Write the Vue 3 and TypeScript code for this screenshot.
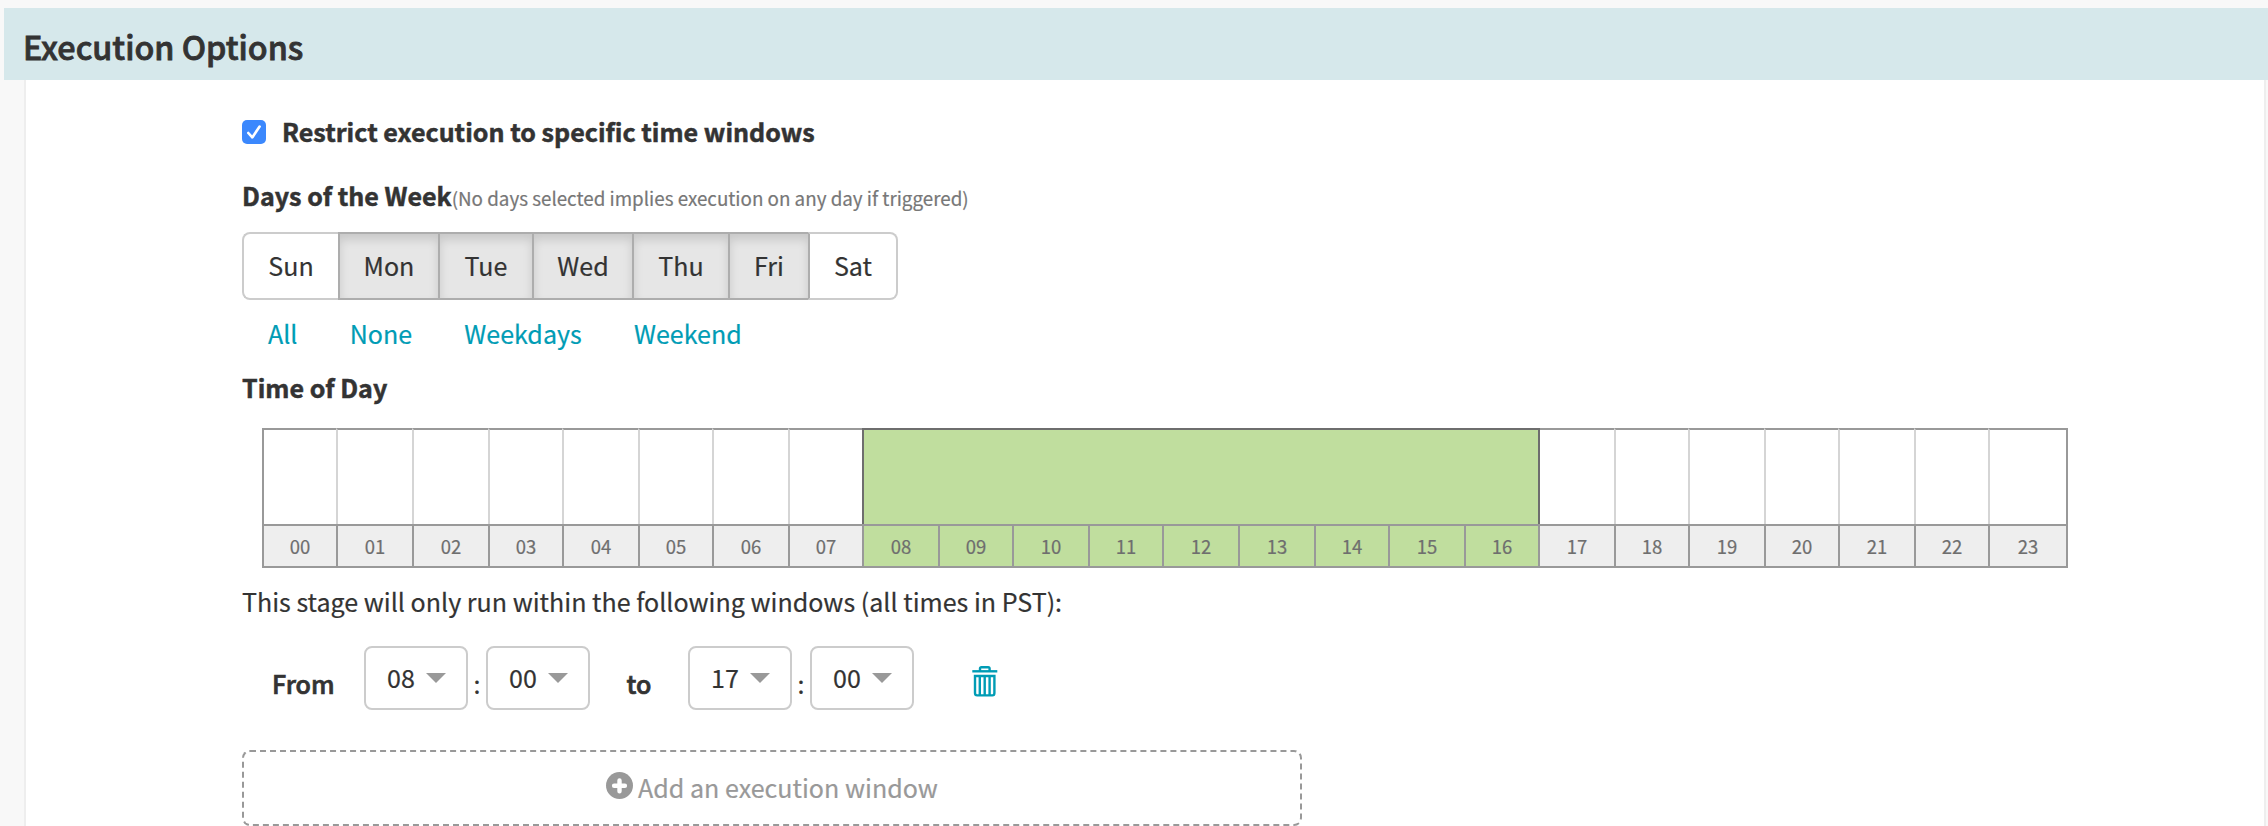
<script setup lang="ts">
import { computed, ref } from 'vue'

interface Day { name: string; on: boolean; width: number }

const restricted = ref(true)

const days = ref<Day[]>([
  { name: 'Sun', on: false, width: 96 },
  { name: 'Mon', on: true, width: 100 },
  { name: 'Tue', on: true, width: 94 },
  { name: 'Wed', on: true, width: 100 },
  { name: 'Thu', on: true, width: 96 },
  { name: 'Fri', on: true, width: 80 },
  { name: 'Sat', on: false, width: 90 },
])

const presets: Record<string, (i: number) => boolean> = {
  All: () => true,
  None: () => false,
  Weekdays: (i) => i > 0 && i < 6,
  Weekend: (i) => i === 0 || i === 6,
}

function applyPreset(test: (i: number) => boolean) {
  days.value.forEach((d, i) => { d.on = test(i) })
}

const from = { hour: 8, minute: 0 }
const to = { hour: 17, minute: 0 }
const pad = (n: number) => String(n).padStart(2, '0')

const hours = Array.from({ length: 24 }, (_, hour) => ({
  hour,
  label: pad(hour),
  active: hour >= from.hour && hour < to.hour,
}))

// Hour columns are about 75px wide, with every edge kept on an even pixel.
const edge = (k: number) =>
  k === 0 ? 0 : k === 24 ? 1804 : 2 * Math.round((74.85 + 75.09 * (k - 1)) / 2)
const columns = computed(() => hours.map((h) => `${edge(h.hour + 1) - edge(h.hour)}px`).join(' '))
const activeSpan = `${from.hour + 1} / ${to.hour + 1}`
</script>

<template>
  <div class="page">
    <header class="section-title"><h2>Execution Options</h2></header>
    <section class="panel">
      <label class="restrict" @click="restricted = !restricted">
        <span class="checkbox">
          <svg v-if="restricted" viewBox="0 0 24 24"><path d="M6.3 13 L10.3 17.4 L17.6 6.6" /></svg>
        </span>
        <span class="restrict-text">Restrict execution to specific time windows</span>
      </label>

      <div class="days-label">
        <span class="days-title">Days of the Week</span>
        <span class="hint">(No days selected implies execution on any day if triggered)</span>
      </div>

      <div class="day-group">
        <button
          v-for="d in days"
          :key="d.name"
          class="day"
          :class="{ on: d.on }"
          :style="{ width: d.width + 'px' }"
          @click="d.on = !d.on"
        >{{ d.name }}</button>
      </div>

      <nav class="presets">
        <a v-for="(test, name) in presets" :key="name" @click="applyPreset(test)">{{ name }}</a>
      </nav>

      <div class="time-title">Time of Day</div>

      <div class="timeline" :style="{ gridTemplateColumns: columns }">
        <div
          v-for="h in hours"
          :key="h.hour"
          class="slot"
          :style="{ gridColumn: h.hour + 1 }"
        ></div>
        <div class="window" :style="{ gridColumn: activeSpan }"></div>
        <div
          v-for="h in hours"
          :key="h.label"
          class="hour"
          :class="{ active: h.active }"
        >{{ h.label }}</div>
      </div>

      <p class="note">This stage will only run within the following windows (all times in PST):</p>

      <div class="range">
        <span class="word from">From</span>
        <div class="select">{{ pad(from.hour) }}<i class="caret"></i></div>
        <span class="word colon">:</span>
        <div class="select">{{ pad(from.minute) }}<i class="caret"></i></div>
        <span class="word to">to</span>
        <div class="select">{{ pad(to.hour) }}<i class="caret"></i></div>
        <span class="word colon">:</span>
        <div class="select">{{ pad(to.minute) }}<i class="caret"></i></div>
        <svg class="trash" viewBox="0 0 26 31">
          <path d="M8 5 V2.6 Q8 1.2 9.4 1.2 H16.2 Q17.6 1.2 17.6 2.6 V5" />
          <path d="M0.3 5.3 H25.3" />
          <path d="M3 10 V27 Q3 29.4 5.2 29.4 H20.4 Q22.4 29.4 22.4 27 V10 Z" />
          <path d="M7.8 10 V29 M12.7 10 V29 M17.6 10 V29" />
        </svg>
      </div>

      <button class="add">
        <svg viewBox="0 0 27 27">
          <circle cx="13.5" cy="13.5" r="13.5" />
          <path d="M13.5 8.4 V19.2 M8.1 13.8 H18.9" />
        </svg>
        <span>Add an execution window</span>
      </button>
    </section>
  </div>
</template>

<style>
body {
  background: #f8f8f8;
}
</style>

<style scoped>
.page {
  box-sizing: border-box;
  height: 826px;
  padding: 8px 0 0 4px;
  overflow: hidden;
  background: #f8f8f8;
  color: #333;
  font: 25.06px/36px "Noto Sans CJK SC", "Open Sans", sans-serif;
  -webkit-text-stroke: 0.2px currentColor;
}
.section-title {
  height: 72px;
  padding-left: 19px;
  background: #d6e8eb;
}
h2 {
  margin: 0;
  font-size: 32.3px;
  font-weight: 500;
  line-height: 76px;
  -webkit-text-stroke: 0.8px #333;
}
.panel {
  box-sizing: border-box;
  width: 2242px;
  height: 746px;
  margin-left: 20px;
  padding: 33px 0 0 216px;
  border: 2px solid #eee;
  border-width: 0 2px;
  background: #fff;
}
.restrict {
  display: flex;
  height: 36px;
  font-weight: 700;
  -webkit-text-stroke: 0.5px #333;
}
.checkbox {
  width: 24px;
  height: 24px;
  margin: 7px 16px 0 0;
  border-radius: 5px;
  background: #3b88fd;
}
.checkbox svg {
  display: block;
  fill: none;
  stroke: #fff;
  stroke-width: 2.6;
  stroke-linecap: round;
  stroke-linejoin: round;
}
.days-label {
  display: flex;
  height: 36px;
  margin-top: 28px;
  align-items: baseline;
}
.days-title,
.time-title {
  font-weight: 700;
  -webkit-text-stroke: 0.5px #333;
}
.hint {
  color: #777;
  font-size: 18.8px;
}
.day-group {
  box-sizing: border-box;
  display: flex;
  width: 656px;
  height: 68px;
  margin-top: 19px;
}
.day {
  box-sizing: border-box;
  height: 68px;
  padding: 0 0 2px;
  border: 2px solid #ccc;
  border-right: 0;
  background: #fff;
  color: #333;
  font: inherit;
}
.day:first-child {
  border-radius: 8px 0 0 8px;
}
.day:last-child {
  border-right: 2px solid #ccc;
  border-radius: 0 8px 8px 0;
}
.day.on {
  border-color: #adadad;
  background: #e6e6e6;
  box-shadow: inset 0 6px 10px rgba(0, 0, 0, 0.125);
}
.day.on + .day {
  border-left-color: #adadad;
}
.presets {
  display: flex;
  gap: 52.2px;
  height: 36px;
  margin-top: 15px;
  padding-left: 26px;
  color: #009cb5;
}
.time-title {
  height: 36px;
  margin-top: 18px;
}
.timeline {
  box-sizing: border-box;
  display: grid;
  width: 1806px;
  height: 140px;
  margin: 23px 0 0 20px;
  grid-template-rows: 96px 44px;
  border-right: 2px solid #999;
}
.slot {
  grid-row: 1;
  border-top: 2px solid #999;
  border-left: 2px solid #d5d5d5;
}
.slot:first-child {
  border-left-color: #999;
}
.window {
  z-index: 1;
  grid-row: 1;
  margin-right: -2px;
  border: 2px solid #6e6e6e;
  border-bottom: 0;
  background: #c0de9e;
}
.hour {
  grid-row: 2;
  border: 2px solid #999;
  border-right: 0;
  background: #eee;
  color: #6e6e6e;
  font-size: 18.5px;
  line-height: 40px;
  text-align: center;
}
.hour.active {
  background: #c0de9e;
}
.note {
  height: 36px;
  margin: 15px 0 0;
}
.range {
  display: flex;
  height: 64px;
  margin-top: 27px;
  padding-left: 30px;
}
.word {
  height: 64px;
  padding-top: 19px;
  box-sizing: border-box;
}
.from,
.to {
  font-weight: 500;
  -webkit-text-stroke: 0.7px #333;
}
.from {
  width: 92px;
}
.to {
  width: 98px;
  text-align: center;
}
.colon {
  width: 18px;
  text-align: center;
}
.select {
  box-sizing: border-box;
  display: flex;
  width: 104px;
  height: 64px;
  padding: 0 20px 2px 21px;
  border: 2px solid #ccc;
  border-radius: 8px;
  align-items: center;
  justify-content: space-between;
  line-height: 58px;
}
.caret {
  width: 0;
  height: 0;
  margin-top: 2px;
  border: 10px solid transparent;
  border-top-color: #999;
  border-bottom: 0;
}
.trash {
  width: 26px;
  height: 31px;
  margin: 20px 0 0 58px;
  fill: none;
  stroke: #009cb5;
  stroke-width: 2.4;
}
.add {
  box-sizing: border-box;
  display: flex;
  width: 1060px;
  height: 76px;
  margin-top: 40px;
  padding: 0 0 2px;
  border: 2px dashed #999;
  border-radius: 8px;
  align-items: center;
  justify-content: center;
  background: none;
  color: #999;
  font: inherit;
}
.add svg {
  width: 27px;
  height: 27px;
  margin: -3px 5px 0 0;
  fill: #999;
}
.add path {
  stroke: #fff;
  stroke-width: 4.4;
  stroke-linecap: round;
}
</style>
